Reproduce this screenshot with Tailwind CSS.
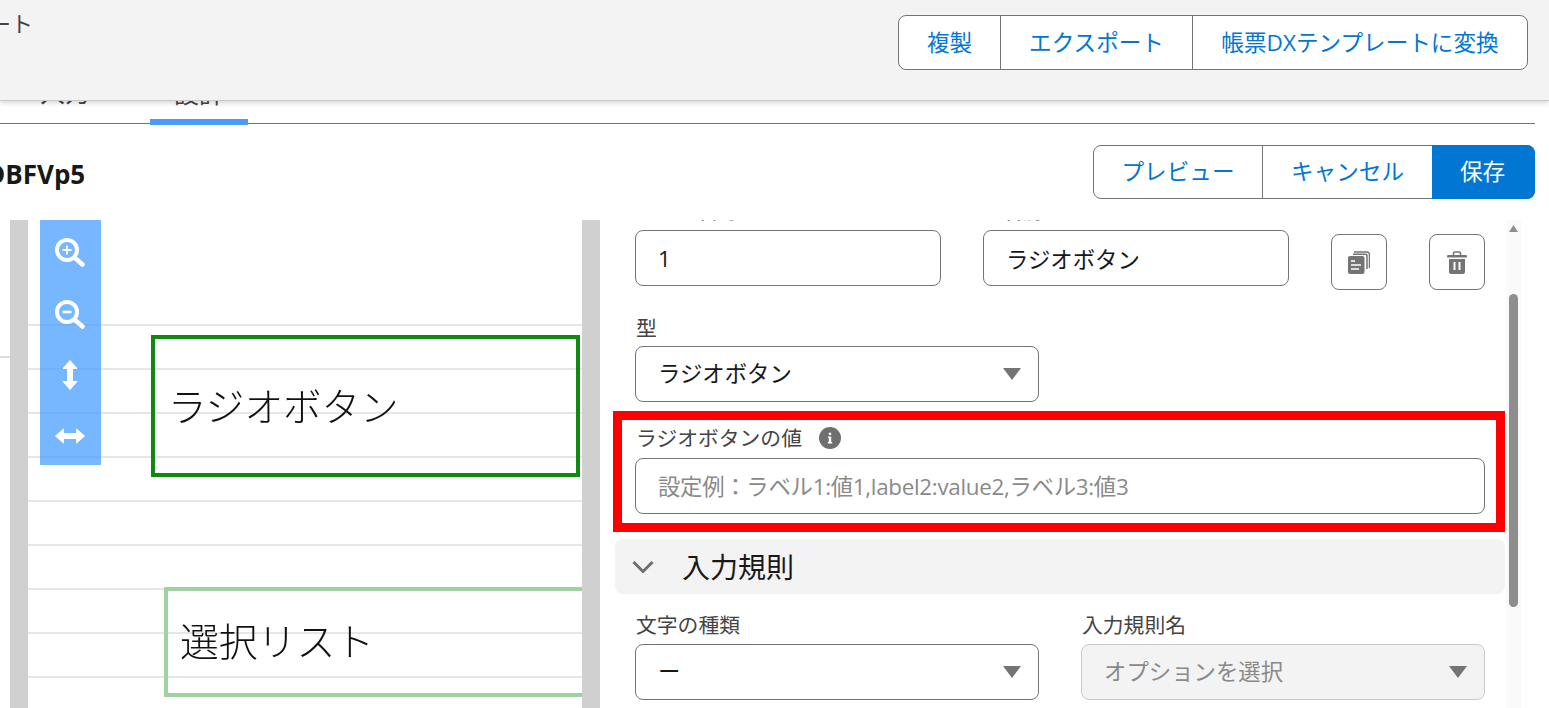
<!DOCTYPE html>
<html lang="ja">
<head>
    <meta charset="UTF-8">
    <title>帳票テンプレート 設計</title>
    <script src="https://cdn.jsdelivr.net/npm/@tailwindcss/browser@4"></script>
</head>
<body class="bg-white w-[1549px] h-[708px] overflow-hidden font-['Open_Sans','Noto_Sans_CJK_JP',sans-serif] text-[#181818]">

    <!-- Page header -->
    <header class="relative z-10 h-[101px] bg-[#f3f3f3] border-b border-[#c9c9c9] shadow-[0_2px_5px_rgba(0,0,0,0.16)] flex justify-between overflow-hidden">
        <div class="-ml-[11px] mt-[7px] text-[22px] leading-[32px] text-[#444444]">ート</div>
        <div class="mt-[15px] mr-[21px] h-[55px] flex bg-white border border-[#747474] rounded-lg text-[#0176d3] text-[22.6px]">
            <button class="w-[102px] border-r border-[#747474]">複製</button>
            <button class="w-[192px] border-r border-[#747474]">エクスポート</button>
            <button class="w-[334px]">帳票DXテンプレートに変換</button>
        </div>
    </header>

    <!-- Tabs, mostly hidden under the header -->
    <nav class="w-[1535px] h-[23px] border-b border-[#747474] flex items-end text-[25px] leading-[30px] text-[#444444]">
        <div class="ml-[40px] w-[48px] -mb-[1px] h-[60px] pt-[13px] shrink-0 whitespace-nowrap">入力</div>
        <div class="ml-[62px] w-[98px] h-[60px] -mb-[2px] pt-[13px] text-center border-b-[6px] border-[#4a9bff] shrink-0">設計</div>
    </nav>

    <!-- Title row -->
    <div class="h-[96px] flex justify-between items-start pr-[14px] pt-[21px]">
        <div class="-ml-[14px] mt-[12px] text-[26px] leading-[34px] font-bold">DBFVp5</div>
        <div class="h-[54px] flex rounded-lg border border-[#747474] text-[#0176d3] text-[22.6px]">
            <button class="w-[169px] border-r border-[#747474]">プレビュー</button>
            <button class="w-[169px]">キャンセル</button>
            <button class="w-[103px] -my-px -mr-px pr-[2px] bg-[#0176d3] text-white rounded-r-lg">保存</button>
        </div>
    </div>

    <main class="flex h-[488px]">
        <!-- Template canvas -->
        <section class="relative w-[600px] pl-[10px] shrink-0">
            <div class="absolute left-0 top-[136px] w-[10px] h-[2px] bg-[#dddddd]"></div>
            <div class="relative h-full border-x-[18px] border-[#d0d0d0] overflow-hidden pt-[104px]">
                <div class="h-[44px] border-t-2 border-[#e6e6e6]"></div>
                <div class="h-[44px] border-t-2 border-[#e6e6e6]"></div>
                <div class="h-[44px] border-t-2 border-[#e6e6e6]"></div>
                <div class="h-[44px] border-t-2 border-[#e6e6e6]"></div>
                <div class="h-[44px] border-t-2 border-[#e6e6e6]"></div>
                <div class="h-[44px] border-t-2 border-[#e6e6e6]"></div>
                <div class="h-[44px] border-t-2 border-[#e6e6e6]"></div>
                <div class="h-[44px] border-t-2 border-[#e6e6e6]"></div>
                <div class="h-[44px] border-t-2 border-[#e6e6e6]"></div>

                <div class="absolute left-[123px] top-[115px] w-[429px] h-[142px] border-[4px] border-[#0f890f] flex items-center pl-[13px] blur-[0.4px]">
                    <span class="text-[38.6px] leading-[50px] font-light text-[#111111] -mt-[1px]">ラジオボタン</span>
                </div>
                <div class="absolute left-[136px] top-[367px] w-[500px] h-[110px] border-[4px] border-[#a0d2a0] flex items-center pl-[12px] blur-[0.4px]">
                    <span class="text-[38.8px] leading-[50px] font-light text-[#111111] -mt-[2px]">選択リスト</span>
                </div>

                <div class="absolute left-[12px] top-0 w-[61px] h-[245px] bg-[#4a9fff]/75 flex flex-col items-center text-white">
                    <svg class="mt-[18px] -ml-[1px]" width="30" height="30" viewBox="0 0 30 30" fill="none" stroke="white">
                        <circle cx="12" cy="12" r="10" stroke-width="4"/>
                        <path d="M12 7.5v9M7.5 12h9" stroke-width="1.8"/>
                        <path d="M20 20l7.5 6.5" stroke-width="4.5" stroke-linecap="round"/>
                    </svg>
                    <svg class="mt-[32px] -ml-[1px]" width="30" height="30" viewBox="0 0 30 30" fill="none" stroke="white">
                        <circle cx="12" cy="12" r="10" stroke-width="4"/>
                        <path d="M7.5 12h9" stroke-width="2.6"/>
                        <path d="M20 20l7.5 6.5" stroke-width="4.5" stroke-linecap="round"/>
                    </svg>
                    <svg class="mt-[30px] -ml-[1px]" width="16" height="30" viewBox="0 0 16 30" fill="white">
                        <path d="M8 0.5l7 8h-4.5v13H15l-7 8-7-8h4.5v-13H1z" stroke="white" stroke-linejoin="round"/>
                    </svg>
                    <svg class="mt-[38px] -ml-[1px]" width="30" height="16" viewBox="0 0 30 16" fill="white">
                        <path d="M0.5 8l8-7v4.5h13V1l8 7-8 7v-4.5h-13V15z" stroke="white" stroke-linejoin="round"/>
                    </svg>
                </div>
            </div>
        </section>

        <!-- Field settings form -->
        <section class="w-[906px] shrink-0 overflow-hidden text-[22.4px]">
            <div class="flex pl-[35px] items-start -mt-[1px]">
                <div class="w-[306px]">
                    <div class="-mt-[19px] mb-[8px] h-[22px] pl-[1px] text-[20.8px] leading-[22px] text-[#444444]">ページ番号</div>
                    <input class="w-full h-[56px] px-[22px] border border-[#747474] rounded-lg text-[#181818] outline-none" value="1">
                </div>
                <div class="w-[306px] ml-[42px]">
                    <div class="-mt-[19px] mb-[8px] h-[22px] pl-[18px] text-[20.8px] leading-[22px] text-[#444444]">名前</div>
                    <input class="w-full h-[56px] px-[22px] border border-[#747474] rounded-lg text-[#181818] outline-none" value="ラジオボタン">
                </div>
                <button class="ml-[42px] mt-[15px] w-[56px] h-[56px] border border-[#747474] rounded-lg flex items-center justify-center">
                    <svg width="22" height="23" viewBox="0 0 22 23">
                        <path d="M6 1h13a2.5 2.5 0 0 1 2.5 2.5V17" fill="none" stroke="#747474" stroke-width="1.5"/>
                        <path d="M5 3.2h12.5a1.5 1.5 0 0 1 1.5 1.5V18" fill="none" stroke="#747474" stroke-width="1.5"/>
                        <rect x="0" y="5" width="16.5" height="18" rx="2" fill="#747474"/>
                        <path d="M3 10h4M3 14h10M3 18h8" stroke="white" stroke-width="1.5"/>
                    </svg>
                </button>
                <button class="ml-[42px] mt-[15px] w-[56px] h-[56px] border border-[#747474] rounded-lg flex items-center justify-center">
                    <svg width="20" height="23" viewBox="0 0 20 23">
                        <path d="M6.5 4V2.5A1.5 1.5 0 0 1 8 1h4a1.5 1.5 0 0 1 1.5 1.5V4" fill="none" stroke="#747474" stroke-width="1.6"/>
                        <rect x="0" y="4" width="20" height="2.6" rx="1.2" fill="#747474"/>
                        <path d="M2 8h16v13a2 2 0 0 1-2 2H4a2 2 0 0 1-2-2z" fill="#747474"/>
                        <path d="M7.5 11v8M12.5 11v8" stroke="white" stroke-width="2"/>
                    </svg>
                </button>
            </div>

            <div class="ml-[35px] mt-[26px] w-[404px]">
                <div class="h-[24px] mb-[6px] pl-[1px] text-[20.8px] leading-[24px] text-[#444444]">型</div>
                <div class="h-[56px] pl-[22px] pr-[17px] flex items-center justify-between border border-[#747474] rounded-lg">
                    <span>ラジオボタン</span>
                    <svg width="18" height="12" viewBox="0 0 18 12" fill="#747474"><path d="M0 0h18l-9 12z"/></svg>
                </div>
            </div>

            <div class="ml-[13px] mt-[9px] w-[892px] h-[121px] border-[9px] border-[#ff0000] pl-[13px] pt-[6px]">
                <div class="h-[24px] mb-[8px] pl-[1px] flex items-center text-[20.8px] leading-[24px] text-[#444444]">
                    <span>ラジオボタンの値</span>
                    <svg class="ml-[17px]" width="22" height="22" viewBox="0 0 22 22">
                        <circle cx="11" cy="11" r="11" fill="#6f6f6f"/>
                        <path d="M9 9.5h3.2v5.5h1v1.5H8.8V15h1v-4H9zM9.8 5.8h2.4v2.3H9.8z" fill="white"/>
                    </svg>
                </div>
                <input class="w-[850px] h-[56px] px-[22px] border border-[#747474] rounded-lg outline-none tracking-[-0.3px] placeholder:text-[#8a8a8a]" placeholder="設定例：ラベル1:値1,label2:value2,ラベル3:値3">
            </div>

            <div class="ml-[15px] mt-[7px] w-[890px] h-[55px] bg-[#f3f3f3] rounded-lg flex items-center">
                <svg class="ml-[17px]" width="22" height="14" viewBox="0 0 22 14" fill="none" stroke="#706e6b" stroke-width="3"><path d="M1.5 2l9.5 9.5L20.5 2"/></svg>
                <span class="ml-[28px] text-[28px] leading-[36px]">入力規則</span>
            </div>

            <div class="ml-[35px] mt-[19px] flex gap-[42px]">
                <div class="w-[404px]">
                    <div class="h-[24px] mb-[7px] pl-[1px] text-[20.8px] leading-[24px] text-[#444444]">文字の種類</div>
                    <div class="h-[56px] pl-[22px] pr-[17px] flex items-center justify-between border border-[#747474] rounded-lg">
                        <span>ー</span>
                        <svg width="18" height="12" viewBox="0 0 18 12" fill="#747474"><path d="M0 0h18l-9 12z"/></svg>
                    </div>
                </div>
                <div class="w-[404px]">
                    <div class="h-[24px] mb-[7px] pl-[1px] text-[20.8px] leading-[24px] text-[#444444]">入力規則名</div>
                    <div class="h-[56px] pl-[22px] pr-[17px] flex items-center justify-between bg-[#f3f3f3] border border-[#c9c9c9] rounded-lg text-[#8a8a8a]">
                        <span>オプションを選択</span>
                        <svg width="18" height="12" viewBox="0 0 18 12" fill="#747474"><path d="M0 0h18l-9 12z"/></svg>
                    </div>
                </div>
            </div>
        </section>

        <!-- Scrollbar -->
        <div class="w-[15px] h-full bg-[#fafafa] flex flex-col items-center pt-[5px]">
            <svg width="9" height="7" viewBox="0 0 9 7" fill="#8e8e8e"><path d="M4.5 0L9 7H0z"/></svg>
            <div class="mt-[62px] w-[9px] h-[313px] rounded-full bg-[#8e8e8e]"></div>
        </div>
    </main>
</body>
</html>
